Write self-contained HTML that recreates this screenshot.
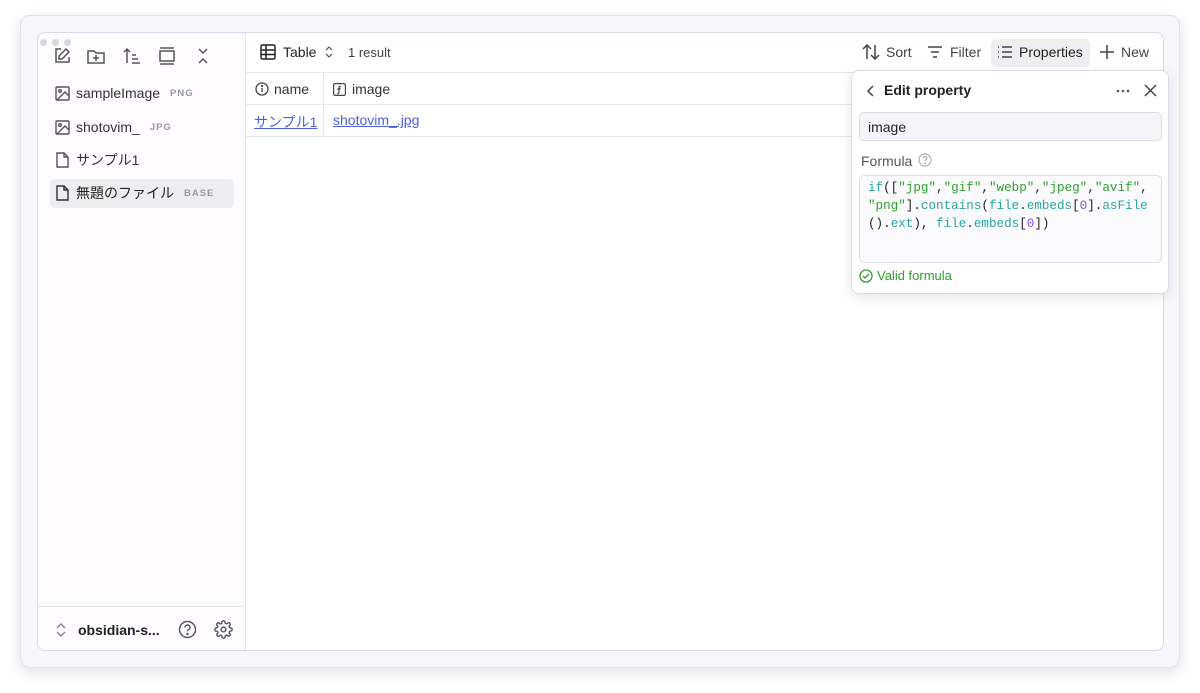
<!DOCTYPE html>
<html><head><meta charset="utf-8"><style>
*{box-sizing:border-box;margin:0;padding:0}
body{width:1200px;height:693px;background:#fff;font-family:"Liberation Sans","Noto Sans CJK JP",sans-serif;position:relative;overflow:hidden;color:#222}
.win{position:absolute;left:20px;top:15px;width:1160px;height:653px;background:#f6f6fb;border:1px solid #e2e2ea;border-radius:10px;box-shadow:0 4px 14px rgba(0,0,0,.12)}
.app{position:absolute;left:37px;top:32px;width:1127px;height:619px;background:#fff;border:1px solid #d8d8f3;border-radius:8px;overflow:hidden}
.side{position:absolute;left:0;top:0;width:208px;height:100%;background:#fdfbfe;border-right:1px solid #e6e6f3}
.dots{position:absolute;left:2px;top:0px}
.dots i{display:inline-block;width:7px;height:7px;border-radius:50%;background:#d9d9de;margin-right:5px}
.ic{position:absolute;stroke:#555;fill:none;stroke-width:1.5}
.f{position:absolute;left:17px;font-size:14px;color:#333;display:flex;align-items:center;height:20px}
.f svg{margin-right:6px}
.tag{font-size:9.5px;color:#999;letter-spacing:1px;margin-left:10px;font-weight:bold}
.sel{position:absolute;left:12px;top:146px;width:184px;height:29px;background:#eeeef0;border-radius:5px}
.bot{position:absolute;left:0;top:573px;width:208px;border-top:1px solid #e6e6f3;height:46px}
.main{position:absolute;left:208px;top:0;right:0;height:100%}
.hdr{position:absolute;top:0;left:0;right:0;height:40px;border-bottom:1px solid #e6e6f0;font-size:14px}
.t{position:absolute;display:flex;align-items:center}
.row{position:absolute;left:0;right:0;border-bottom:1px solid #e6e6f0;height:32px}
.lnk{color:#4a62e0;text-decoration:underline;font-size:14px}
.pop{position:absolute;left:851px;top:70px;width:318px;height:224px;background:#fff;border:1px solid #dcdce6;border-radius:8px;box-shadow:0 3px 12px rgba(0,0,0,.1)}
.code{font-family:"Liberation Mono","DejaVu Sans Mono",monospace;font-size:12.6px;line-height:18px}
.g{color:#2e9e2e}.c{color:#2aa3a3}.p{color:#8a4fe0}
</style></head><body>
<div class="win"></div>
<div class="app">
 <div class="side">
  <div class="dots"><i></i><i></i><i></i></div>
  <svg class="ic" style="left:15px;top:14px" width="18" height="18" viewBox="0 0 18 18"><path d="M8 2H3v13h13v-5"/><path d="M13 2l3 3-7 7H6V9z"/></svg>
  <svg class="ic" style="left:49px;top:14px" width="18" height="18" viewBox="0 0 18 18"><path d="M1 4h6l2 2h8v10H1z"/><path d="M9 8v6M6 11h6"/></svg>
  <svg class="ic" style="left:85px;top:14px" width="18" height="18" viewBox="0 0 18 18"><path d="M4 16V2M1 5l3-3 3 3M9 8h4M9 12h6M9 16h8"/></svg>
  <svg class="ic" style="left:120px;top:14px" width="18" height="18" viewBox="0 0 18 18"><path d="M2 1h14M2 4h14v10H2zM2 17h14"/></svg>
  <svg class="ic" style="left:156px;top:14px" width="18" height="18" viewBox="0 0 18 18"><path d="M5 2l4 4 4-4M5 16l4-4 4 4"/></svg>
  <div class="sel"></div>
  <div class="f" style="top:50px"><svg width="15" height="15" viewBox="0 0 15 15" fill="none" stroke="#555" stroke-width="1.4"><rect x="1" y="1" width="13" height="13" rx="1"/><circle cx="5" cy="5" r="1.3"/><path d="M14 10l-4-4-8 8"/></svg>sampleImage<span class="tag">PNG</span></div>
  <div class="f" style="top:84px"><svg width="15" height="15" viewBox="0 0 15 15" fill="none" stroke="#555" stroke-width="1.4"><rect x="1" y="1" width="13" height="13" rx="1"/><circle cx="5" cy="5" r="1.3"/><path d="M14 10l-4-4-8 8"/></svg>shotovim_<span class="tag">JPG</span></div>
  <div class="f" style="top:117px"><svg width="15" height="16" viewBox="0 0 15 16" fill="none" stroke="#555" stroke-width="1.4"><path d="M2 1h7l4 4v10H2zM9 1v4h4"/></svg>サンプル1</div>
  <div class="f" style="top:150px;color:#222"><svg width="15" height="16" viewBox="0 0 15 16" fill="none" stroke="#333" stroke-width="1.4"><path d="M2 1h7l4 4v10H2zM9 1v4h4"/></svg>無題のファイル<span class="tag">BASE</span></div>
  <div class="bot">
   <svg style="position:absolute;left:17px;top:15px" width="12" height="16" viewBox="0 0 12 16" fill="none" stroke="#888" stroke-width="1.4"><path d="M2 6l4-4 4 4M2 10l4 4 4-4"/></svg>
   <div style="position:absolute;left:40px;top:15px;font-size:14px;font-weight:bold;color:#222">obsidian-s...</div>
   <svg style="position:absolute;left:140px;top:13px" width="19" height="19" viewBox="0 0 19 19" fill="none" stroke="#555" stroke-width="1.4"><circle cx="9.5" cy="9.5" r="8"/><path d="M7 7.5a2.5 2.5 0 1 1 3.3 2.3c-.6.3-.8.8-.8 1.5"/><circle cx="9.5" cy="14" r=".5" fill="#555"/></svg>
   <svg style="position:absolute;left:176px;top:13px" width="19" height="19" viewBox="0 0 24 24" fill="none" stroke="#555" stroke-width="1.8"><circle cx="12" cy="12" r="3"/><path d="M19.4 15a1.6 1.6 0 0 0 .3 1.8l.1.1a2 2 0 1 1-2.8 2.8l-.1-.1a1.6 1.6 0 0 0-1.8-.3 1.6 1.6 0 0 0-1 1.5V21a2 2 0 1 1-4 0v-.1a1.6 1.6 0 0 0-1-1.5 1.6 1.6 0 0 0-1.8.3l-.1.1a2 2 0 1 1-2.8-2.8l.1-.1a1.6 1.6 0 0 0 .3-1.8 1.6 1.6 0 0 0-1.5-1H3a2 2 0 1 1 0-4h.1a1.6 1.6 0 0 0 1.5-1 1.6 1.6 0 0 0-.3-1.8l-.1-.1a2 2 0 1 1 2.8-2.8l.1.1a1.6 1.6 0 0 0 1.8.3H9a1.6 1.6 0 0 0 1-1.5V3a2 2 0 1 1 4 0v.1a1.6 1.6 0 0 0 1 1.5 1.6 1.6 0 0 0 1.8-.3l.1-.1a2 2 0 1 1 2.8 2.8l-.1.1a1.6 1.6 0 0 0-.3 1.8V9a1.6 1.6 0 0 0 1.5 1H21a2 2 0 1 1 0 4h-.1a1.6 1.6 0 0 0-1.5 1z"/></svg>
  </div>
 </div>
 <div class="main">
  <div class="hdr">
   <div class="t" style="left:14px;top:11px"><svg width="16" height="16" viewBox="0 0 16 16" fill="none" stroke="#222" stroke-width="1.5"><rect x="1" y="1" width="14" height="14" rx="1.5"/><path d="M1 6h14M1 10.5h14M6 1v14"/></svg><span style="margin-left:7px;color:#222">Table</span><svg style="margin-left:8px" width="10" height="14" viewBox="0 0 10 14" fill="none" stroke="#666" stroke-width="1.3"><path d="M2 5l3-3 3 3M2 9l3 3 3-3"/></svg></div>
   <div class="t" style="left:102px;top:12px;font-size:13px;color:#444">1 result</div>
   <div class="t" style="left:616px;top:11px;color:#444"><svg width="18" height="16" viewBox="0 0 18 16" fill="none" stroke="#444" stroke-width="1.5"><path d="M5 15V1M1 5l4-4 4 4M13 1v14M9 11l4 4 4-4"/></svg><span style="margin-left:6px">Sort</span></div>
   <div class="t" style="left:681px;top:11px;color:#444"><svg width="16" height="16" viewBox="0 0 16 16" fill="none" stroke="#444" stroke-width="1.5"><path d="M1 3h14M4 8h8M6 13h4"/></svg><span style="margin-left:7px">Filter</span></div>
   <div style="position:absolute;left:745px;top:6px;width:99px;height:28px;background:#efeff1;border-radius:5px"></div>
   <div class="t" style="left:751px;top:11px;color:#222"><svg width="16" height="16" viewBox="0 0 16 16" fill="none" stroke="#444" stroke-width="1.5"><path d="M1 3h1M1 8h1M1 13h1M5 3h10M5 8h10M5 13h10"/></svg><span style="margin-left:6px">Properties</span></div>
   <div class="t" style="left:854px;top:11px;color:#444"><svg width="14" height="14" viewBox="0 0 14 14" fill="none" stroke="#444" stroke-width="1.5"><path d="M7 0v14M0 7h14"/></svg><span style="margin-left:7px">New</span></div>
  </div>
  <div class="row" style="top:40px">
   <div class="t" style="left:9px;top:8px;font-size:14px;color:#333"><svg width="14" height="14" viewBox="0 0 14 14" fill="none" stroke="#444" stroke-width="1.3"><circle cx="7" cy="7" r="6"/><path d="M7 6v4"/><circle cx="7" cy="4" r=".5" fill="#444"/></svg><span style="margin-left:5px">name</span></div>
   <div style="position:absolute;left:77px;top:0;height:64px;border-left:1px solid #e6e6f0"></div>
   <div class="t" style="left:87px;top:8px;font-size:14px;color:#333"><svg width="13" height="13" viewBox="0 0 13 13" fill="none" stroke="#444" stroke-width="1.2"><rect x=".6" y=".6" width="11.8" height="11.8" rx="1.5"/><path d="M8 3.5c-1.5-.5-2 .3-2 1.5v4.5c0 1-.8 1.3-1.8 1M4.3 6h3.4"/></svg><span style="margin-left:6px">image</span></div>
  </div>
  <div class="row" style="top:72px">
   <div class="t lnk" style="left:8px;top:7px">サンプル1</div>
   <div class="t lnk" style="left:87px;top:7px">shotovim_.jpg</div>
  </div>
 </div>
</div>
<div class="pop">
 <svg style="position:absolute;left:14px;top:13px" width="10" height="14" viewBox="0 0 10 14" fill="none" stroke="#444" stroke-width="1.5"><path d="M7 2L2 7l5 5"/></svg>
 <div style="position:absolute;left:32px;top:11px;font-size:14px;font-weight:bold;color:#222">Edit property</div>
 <svg style="position:absolute;left:264px;top:18px" width="14" height="4" viewBox="0 0 14 4" fill="#555"><circle cx="2" cy="2" r="1.3"/><circle cx="7" cy="2" r="1.3"/><circle cx="12" cy="2" r="1.3"/></svg>
 <svg style="position:absolute;left:292px;top:13px" width="13" height="13" viewBox="0 0 13 13" fill="none" stroke="#444" stroke-width="1.5"><path d="M1 1l11 11M12 1L1 12"/></svg>
 <div style="position:absolute;left:7px;top:41px;width:303px;height:29px;background:#f5f5f7;border:1px solid #dcdce6;border-radius:5px;font-size:14px;padding:6px 8px;color:#222">image</div>
 <div style="position:absolute;left:9px;top:82px;font-size:14px;color:#555">Formula</div>
 <svg style="position:absolute;left:66px;top:82px" width="14" height="14" viewBox="0 0 14 14" fill="none" stroke="#aaa" stroke-width="1.2"><circle cx="7" cy="7" r="6"/><path d="M5.3 5.3a1.8 1.8 0 1 1 2.3 1.7c-.4.2-.6.5-.6 1"/><circle cx="7" cy="10.3" r=".4" fill="#aaa"/></svg>
 <div class="code" style="position:absolute;left:7px;top:104px;width:303px;height:88px;background:#fbfbfd;border:1px solid #dcdce6;border-radius:5px;padding:3px 8px;white-space:pre"><span class="c">if</span>([<span class="g">"jpg"</span>,<span class="g">"gif"</span>,<span class="g">"webp"</span>,<span class="g">"jpeg"</span>,<span class="g">"avif"</span>,
<span class="g">"png"</span>].<span class="c">contains</span>(<span class="c">file</span>.<span class="c">embeds</span>[<span class="p">0</span>].<span class="c">asFile</span>
().<span class="c">ext</span>), <span class="c">file</span>.<span class="c">embeds</span>[<span class="p">0</span>])</div>
 <svg style="position:absolute;left:7px;top:198px" width="14" height="14" viewBox="0 0 14 14" fill="none" stroke="#2e9e2e" stroke-width="1.3"><circle cx="7" cy="7" r="6"/><path d="M4 7l2 2 4-4"/></svg>
 <div style="position:absolute;left:25px;top:197px;font-size:13px;color:#2e9e2e">Valid formula</div>
</div>
</body></html>
